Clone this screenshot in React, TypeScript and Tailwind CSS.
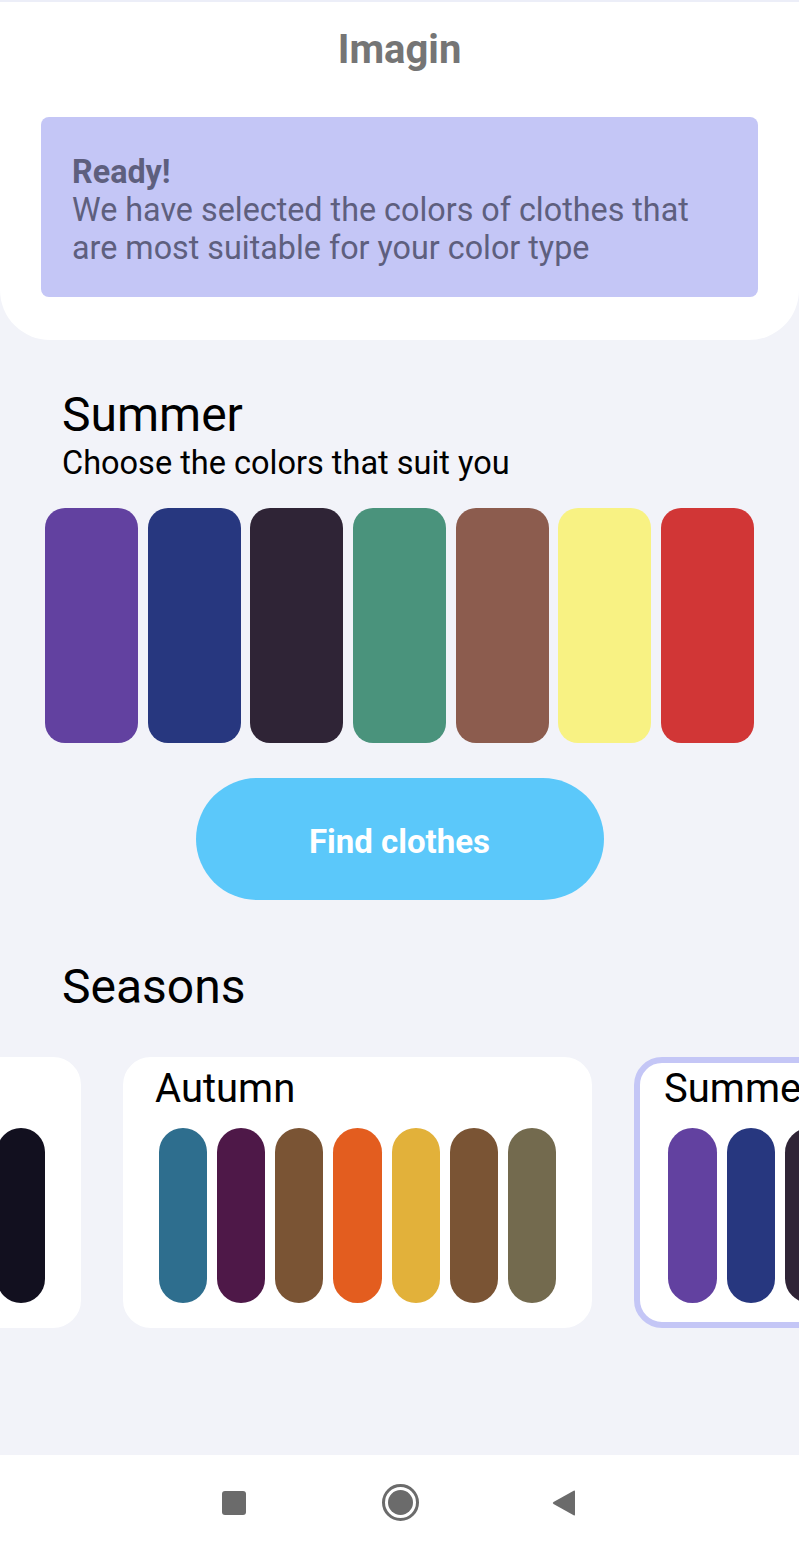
import { Fragment } from 'react'

const summer = ['#6241a0', '#27377f', '#2f2436', '#4a937c', '#8c5c4e', '#f8f283', '#d13636']

const seasons = [
  { name: 'Winter', colors: ['#1b2a6b', '#8a1c3c', '#0f6b5c', '#c2185b', '#3b3f8f', '#e4e4ec', '#12101f'] },
  { name: 'Autumn', colors: ['#2e6e8e', '#4e1848', '#7a5434', '#e35d1f', '#e2b13a', '#7a5434', '#736a4e'] },
  { name: 'Summer', colors: summer, selected: true },
]

export default function App() {
  return (
    <div className="flex h-[1550px] w-[799px] flex-col overflow-hidden bg-[#f2f3f9] font-['Roboto',sans-serif]">
      {/* Header card */}
      <div className="rounded-b-[50px] border-t-2 border-[#eceef8] bg-white px-[41px] pt-[24px] pb-[43px]">
        <h1 className="text-center text-[40px] font-bold leading-[48px] text-[#757575]">Imagin</h1>
        <div className="mt-[43px] rounded-lg bg-[#c4c6f6] px-[31px] pt-[36px] pb-[30px] text-[32.3px] leading-[38px] text-[#5e5f7e]">
          <p className="font-bold">Ready!</p>
          <p>We have selected the colors of clothes that are most suitable for your color type</p>
        </div>
      </div>

      <div className="flex-1">
        {/* Current palette */}
        <div className="px-[62px] pt-[47px]">
          <h2 className="text-[48px] leading-[56px] text-black">Summer</h2>
          <p className="text-[32.5px] leading-[40px] text-black">Choose the colors that suit you</p>
        </div>
        <div className="mt-[25px] flex gap-[9.5px] px-[45px]">
          {summer.map((c, i) => (
            <div key={i} className="h-[235px] flex-1 rounded-[20px]" style={{ backgroundColor: c }} />
          ))}
        </div>
        <div className="mt-[35px] flex justify-center">
          <button className="h-[122px] w-[408px] rounded-full bg-[#5bc8fa] pt-[6px] text-[33px] font-bold text-white">
            Find clothes
          </button>
        </div>

        {/* Seasons */}
        <h2 className="mt-[59px] px-[62px] text-[48px] leading-[56px] text-black">Seasons</h2>
        <div className="mt-[42px] overflow-hidden">
          <div className="ml-[-388px] flex gap-[42px]">
            {seasons.map(s => (
              <div
                key={s.name}
                className={`w-[469px] shrink-0 rounded-[28px] bg-white pb-[19px] ${
                  s.selected
                    ? 'border-[6px] border-[#c4c6f6] px-[28px] pt-[4px]'
                    : 'border-[5px] border-white px-[31px] pt-[5px]'
                }`}
              >
                <p className="-ml-1 text-[40px] leading-[44px] text-black">{s.name}</p>
                <div className="mt-[17px] flex gap-[10px]">
                  {s.colors.map((c, i) => (
                    <Fragment key={i}>
                      <div className="h-[175px] flex-1 rounded-full" style={{ backgroundColor: c }} />
                    </Fragment>
                  ))}
                </div>
              </div>
            ))}
          </div>
        </div>
      </div>

      {/* Navigation bar */}
      <div className="flex h-[95px] items-center bg-white pl-[222px]">
        <div className="h-[24px] w-[24px] rounded-[3px] bg-[#6b6b6b]" />
        <div className="ml-[136px] flex h-[37px] w-[37px] items-center justify-center rounded-full border-[3px] border-[#6b6b6b]">
          <div className="h-[25px] w-[25px] rounded-full bg-[#6b6b6b]" />
        </div>
        <svg className="ml-[133px]" width="24" height="26" viewBox="0 0 24 26">
          <path d="M23 1.5 L23 24.5 Q23 26 21.7 25.3 L1.5 14 Q0 13 1.5 12 L21.7 0.7 Q23 0 23 1.5 Z" fill="#6b6b6b" />
        </svg>
      </div>
    </div>
  )
}
